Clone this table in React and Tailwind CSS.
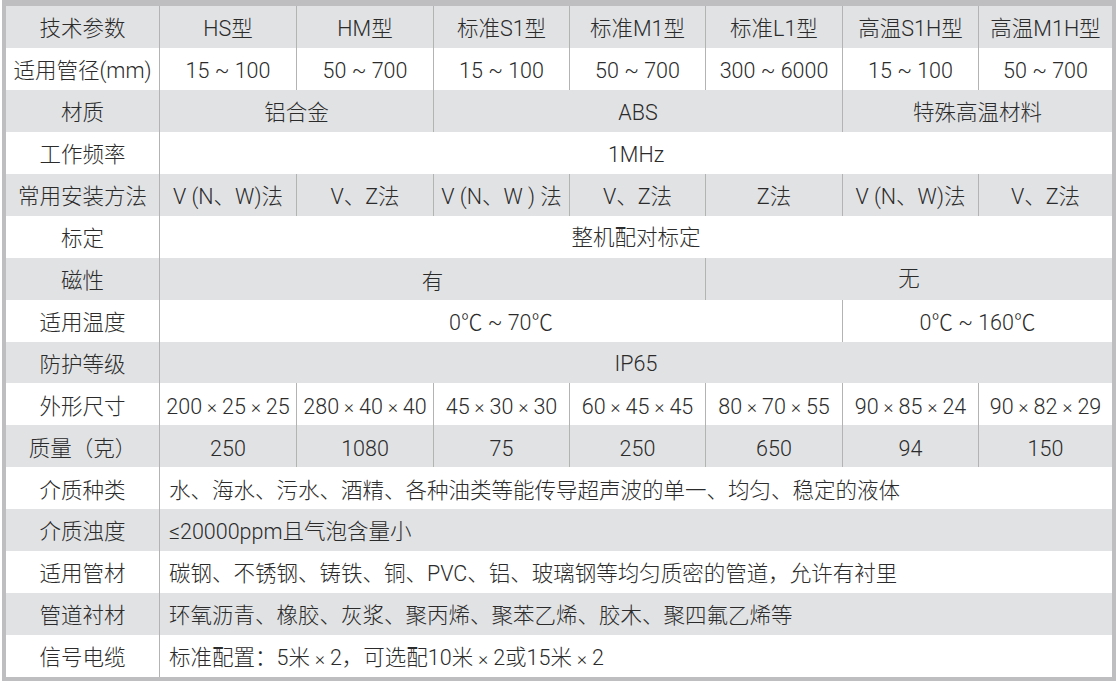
import React from "react";

const SPAN = {
  1: "col-span-1",
  2: "col-span-2",
  3: "col-span-3",
  4: "col-span-4",
  5: "col-span-5",
  7: "col-span-7",
};

const X = () => <span className="text-[19px] mx-[5px]">×</span>;

const rows = [
  ["技术参数", [["HS型", 1], ["HM型", 1], ["标准S1型", 1], ["标准M1型", 1], ["标准L1型", 1], ["高温S1H型", 1], ["高温M1H型", 1]]],
  ["适用管径(mm)", [["15 ~ 100", 1], ["50 ~ 700", 1], ["15 ~ 100", 1], ["50 ~ 700", 1], ["300 ~ 6000", 1], ["15 ~ 100", 1], ["50 ~ 700", 1]]],
  ["材质", [["铝合金", 2], ["ABS", 3], ["特殊高温材料", 2]]],
  ["工作频率", [["1MHz", 7]]],
  ["常用安装方法", [["V (N、W)法", 1], ["V、Z法", 1], ["V (N、W ) 法", 1], ["V、Z法", 1], ["Z法", 1], ["V (N、W)法", 1], ["V、Z法", 1]]],
  ["标定", [["整机配对标定", 7, "pb-[1px]"]]],
  ["磁性", [["有", 4, "pt-[7px]"], ["无", 3, "pb-[3px]"]]],
  ["适用温度", [["0℃ ~ 70℃", 5, "pt-[3px]"], ["0℃ ~ 160℃", 2]]],
  ["防护等级", [["IP65", 7, "pb-[2px]"]]],
  ["外形尺寸", [[<>200<X />25<X />25</>, 1], [<>280<X />40<X />40</>, 1], [<>45<X />30<X />30</>, 1], [<>60<X />45<X />45</>, 1], [<>80<X />70<X />55</>, 1], [<>90<X />85<X />24</>, 1], [<>90<X />82<X />29</>, 1]]],
  ["质量（克）", [["250", 1], ["1080", 1], ["75", 1], ["250", 1], ["650", 1], ["94", 1], ["150", 1]]],
  ["介质种类", [["水、海水、污水、酒精、各种油类等能传导超声波的单一、均匀、稳定的液体", 7, "", true]]],
  ["介质浊度", [["≤20000ppm且气泡含量小", 7, "", true]]],
  ["适用管材", [["碳钢、不锈钢、铸铁、铜、PVC、铝、玻璃钢等均匀质密的管道，允许有衬里", 7, "", true]]],
  ["管道衬材", [["环氧沥青、橡胶、灰浆、聚丙烯、聚苯乙烯、胶木、聚四氟乙烯等", 7, "", true]]],
  ["信号电缆", [[<>标准配置：5米<X />2，可选配10米<X />2或15米<X />2</>, 7, "", true]]],
];

export default function App() {
  return (
    <div className="w-[1120px] h-[686px] bg-white">
      <div className="ml-[2px] w-[1114px] border-t-[6px] border-l-4 border-r-4 border-b-4 border-[#bebec0]">
        <div
          className="grid grid-cols-[153px_137px_137px_136px_136px_137px_136px_134px] grid-rows-[repeat(16,1fr)] h-[671px] text-[#2b2b2b] text-[21.5px] leading-none font-light"
          style={{ fontFamily: '"Roboto", "Noto Sans CJK SC", sans-serif' }}
        >
          {rows.map(([label, cells], ri) => {
            const bg = ri % 2 === 0 ? "bg-[#e1e2e4]" : "bg-white";
            return (
              <React.Fragment key={ri}>
                <div className={`${bg} flex items-center justify-center whitespace-nowrap pt-[4px]`}>{label}</div>
                {cells.map(([t, span, extra, left], ci) => (
                  <div
                    key={ci}
                    className={`${bg} ${SPAN[span]} border-l border-[#b3b3b3] flex items-center whitespace-nowrap pt-[4px] ${left ? "justify-start pl-[9px]" : "justify-center"} ${extra || ""}`}
                  >
                    {t}
                  </div>
                ))}
              </React.Fragment>
            );
          })}
        </div>
      </div>
    </div>
  );
}
